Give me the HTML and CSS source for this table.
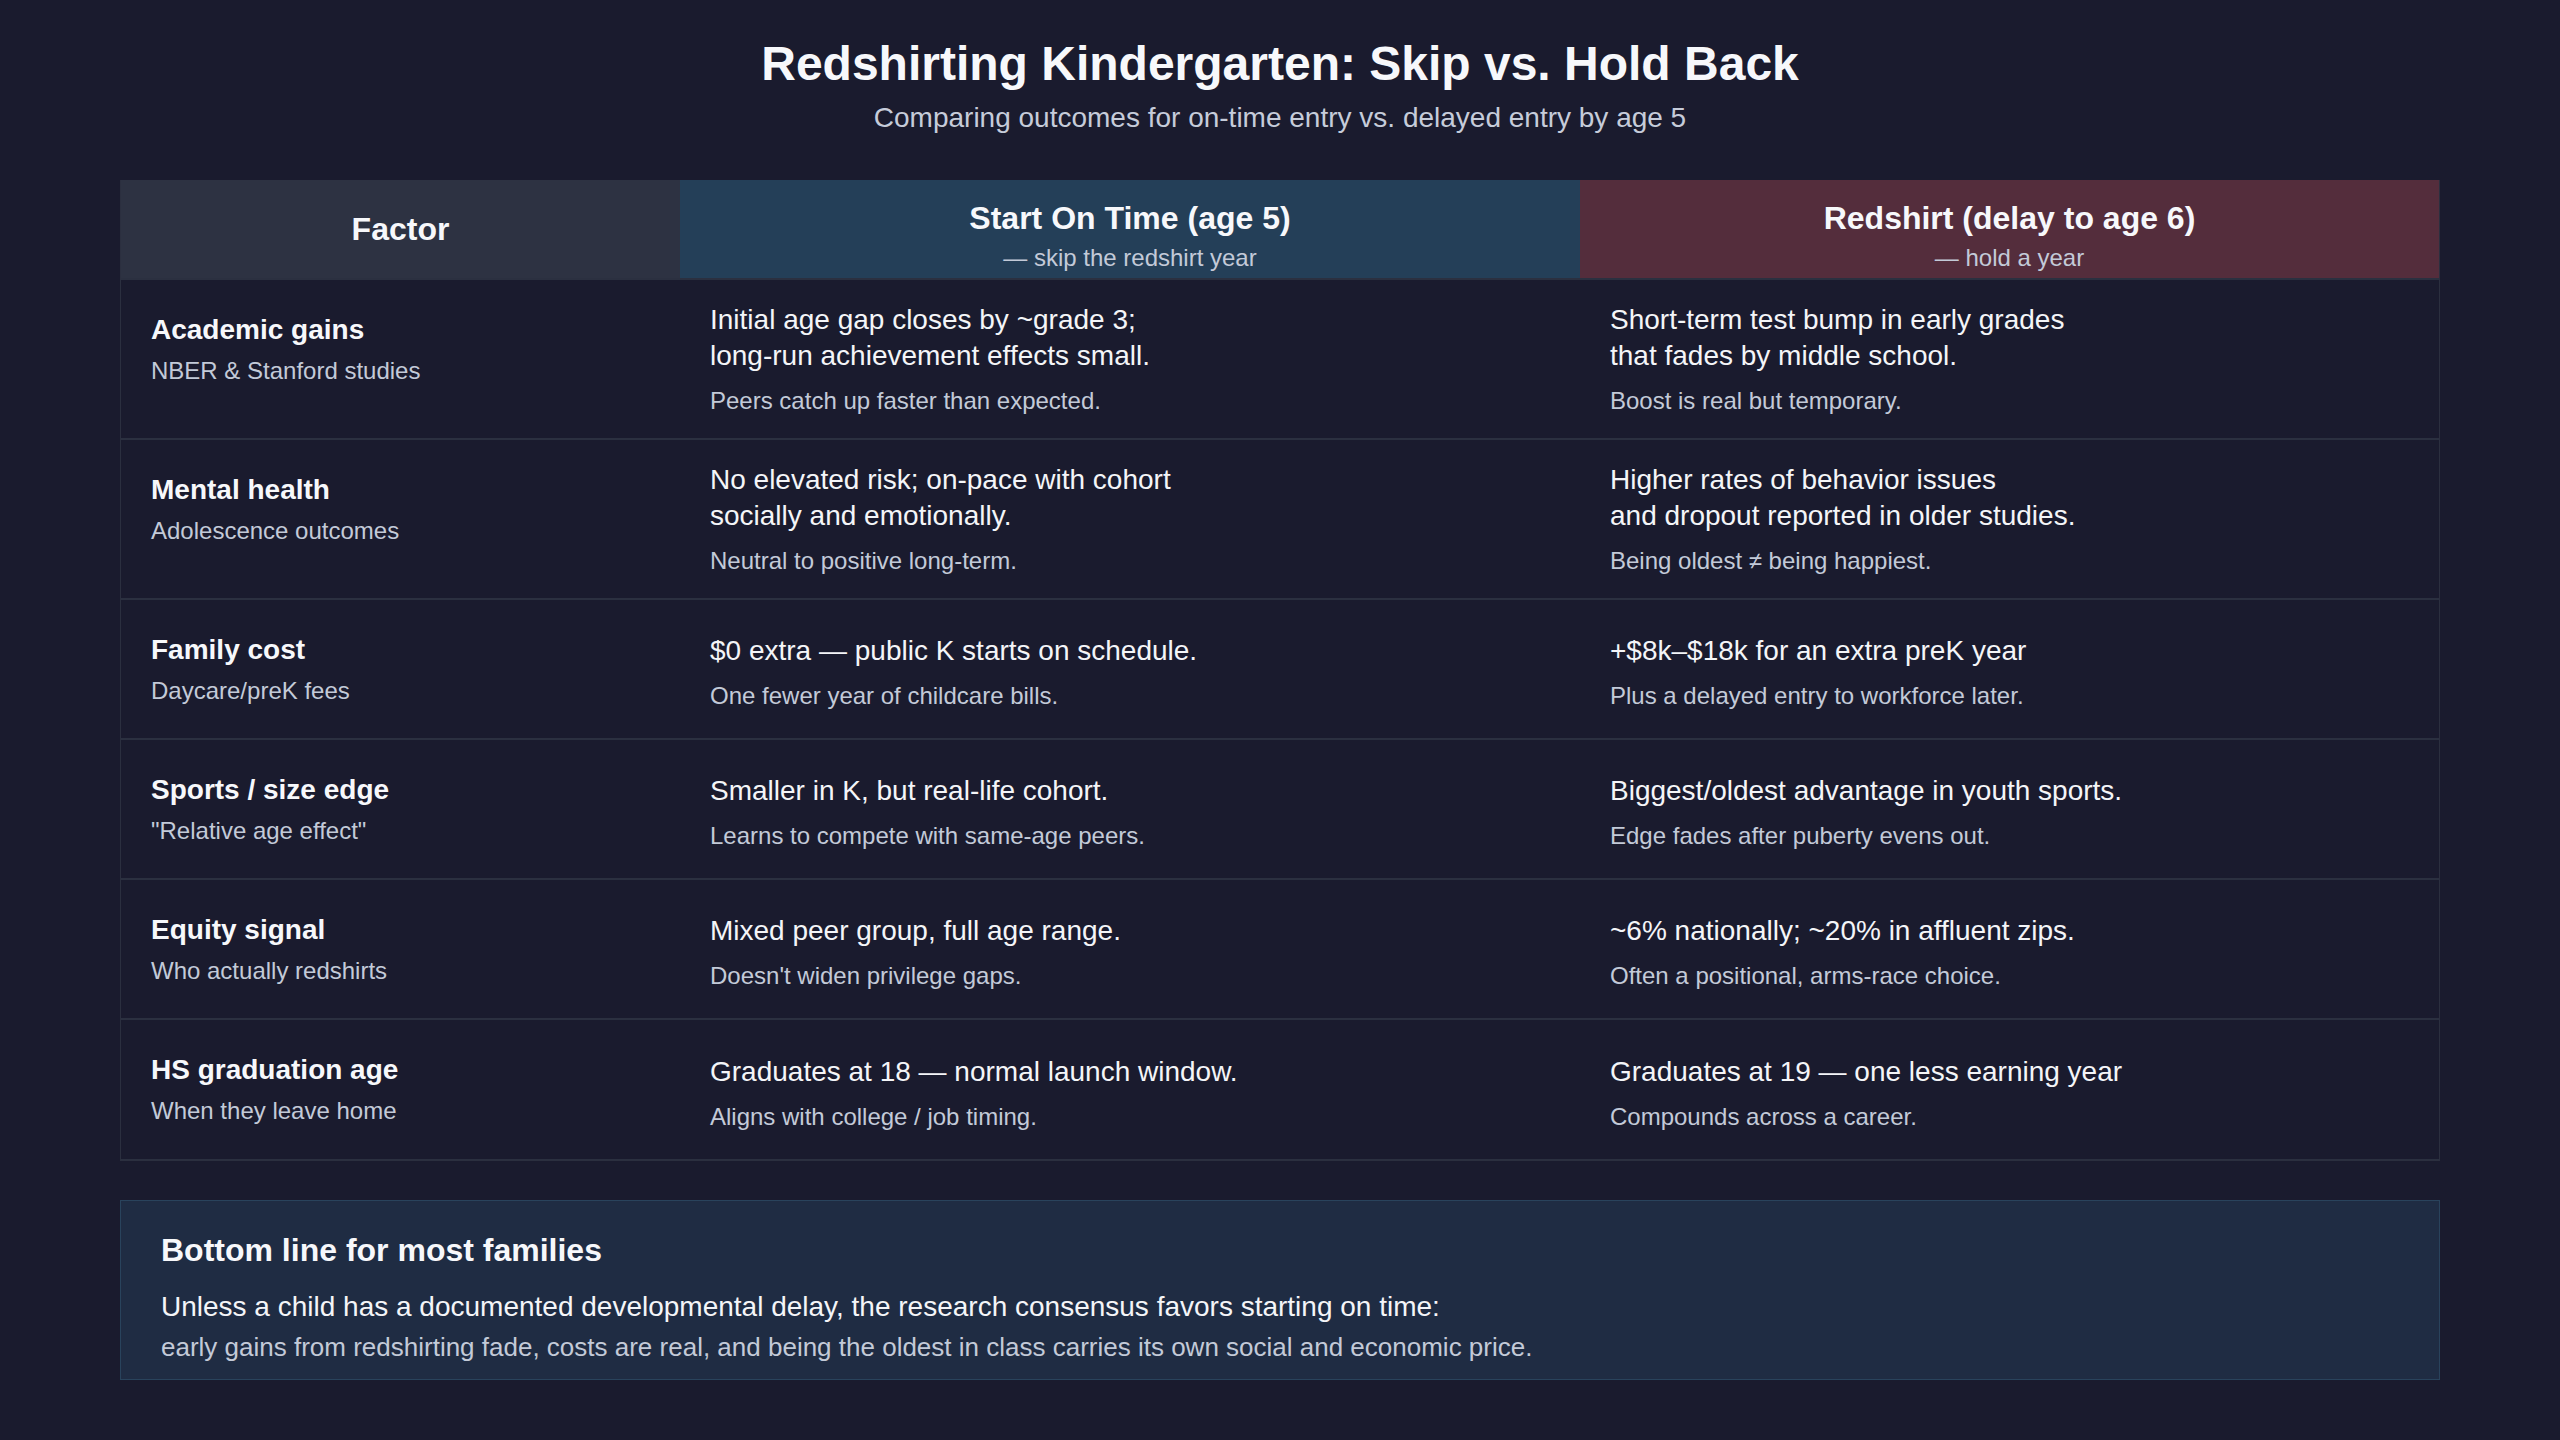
FILE: index.html
```html
<!DOCTYPE html>
<html lang="en">
<head>
<meta charset="utf-8">
<title>Redshirting Kindergarten: Skip vs. Hold Back</title>
<link rel="stylesheet" href="styles.css">
</head>
<body>
<main class="page">
  <header class="page-head">
    <h1 class="title">Redshirting Kindergarten: Skip vs. Hold Back</h1>
    <p class="subtitle">Comparing outcomes for on-time entry vs. delayed entry by age 5</p>
  </header>

  <section class="table">
    <div class="row head-row">
      <div class="hcell h-factor"><span class="h-title">Factor</span></div>
      <div class="hcell h-ontime"><span class="h-title">Start On Time (age 5)</span><span class="h-sub">— skip the redshirt year</span></div>
      <div class="hcell h-redshirt"><span class="h-title">Redshirt (delay to age 6)</span><span class="h-sub">— hold a year</span></div>
    </div>

    <div class="row body-row tall">
      <div class="factor"><div class="f-title">Academic gains</div><div class="f-sub">NBER &amp; Stanford studies</div></div>
      <div class="cell"><div class="main">Initial age gap closes by ~grade 3;<br>long-run achievement effects small.</div><div class="note">Peers catch up faster than expected.</div></div>
      <div class="cell"><div class="main">Short-term test bump in early grades<br>that fades by middle school.</div><div class="note">Boost is real but temporary.</div></div>
    </div>

    <div class="row body-row tall">
      <div class="factor"><div class="f-title">Mental health</div><div class="f-sub">Adolescence outcomes</div></div>
      <div class="cell"><div class="main">No elevated risk; on-pace with cohort<br>socially and emotionally.</div><div class="note">Neutral to positive long-term.</div></div>
      <div class="cell"><div class="main">Higher rates of behavior issues<br>and dropout reported in older studies.</div><div class="note">Being oldest ≠ being happiest.</div></div>
    </div>

    <div class="row body-row">
      <div class="factor"><div class="f-title">Family cost</div><div class="f-sub">Daycare/preK fees</div></div>
      <div class="cell"><div class="main">$0 extra — public K starts on schedule.</div><div class="note">One fewer year of childcare bills.</div></div>
      <div class="cell"><div class="main">+$8k–$18k for an extra preK year</div><div class="note">Plus a delayed entry to workforce later.</div></div>
    </div>

    <div class="row body-row">
      <div class="factor"><div class="f-title">Sports / size edge</div><div class="f-sub">"Relative age effect"</div></div>
      <div class="cell"><div class="main">Smaller in K, but real-life cohort.</div><div class="note">Learns to compete with same-age peers.</div></div>
      <div class="cell"><div class="main">Biggest/oldest advantage in youth sports.</div><div class="note">Edge fades after puberty evens out.</div></div>
    </div>

    <div class="row body-row">
      <div class="factor"><div class="f-title">Equity signal</div><div class="f-sub">Who actually redshirts</div></div>
      <div class="cell"><div class="main">Mixed peer group, full age range.</div><div class="note">Doesn't widen privilege gaps.</div></div>
      <div class="cell"><div class="main">~6% nationally; ~20% in affluent zips.</div><div class="note">Often a positional, arms-race choice.</div></div>
    </div>

    <div class="row body-row last">
      <div class="factor"><div class="f-title">HS graduation age</div><div class="f-sub">When they leave home</div></div>
      <div class="cell"><div class="main">Graduates at 18 — normal launch window.</div><div class="note">Aligns with college / job timing.</div></div>
      <div class="cell"><div class="main">Graduates at 19 — one less earning year</div><div class="note">Compounds across a career.</div></div>
    </div>
  </section>

  <section class="summary">
    <h2 class="sum-title">Bottom line for most families</h2>
    <p class="sum-main">Unless a child has a documented developmental delay, the research consensus favors starting on time:</p>
    <p class="sum-sub">early gains from redshirting fade, costs are real, and being the oldest in class carries its own social and economic price.</p>
  </section>
</main>
</body>
</html>
```

FILE: styles.css
```css
* { box-sizing: border-box; }

html, body {
  margin: 0;
  padding: 0;
  background: #1a1b2e;
}

body {
  font-family: "Liberation Sans", Arial, Helvetica, sans-serif;
  color: #f4f5f8;
}

.page {
  width: 2560px;
  min-height: 1440px;
  padding: 36px 120px 0;
}

.page-head {
  text-align: center;
}

.title {
  margin: 0;
  font-size: 48px;
  line-height: 56px;
  font-weight: 700;
  color: #f7f8fb;
}

.subtitle {
  margin: 8px 0 0;
  font-size: 28px;
  line-height: 36px;
  color: #c6ccda;
}

.table {
  margin-top: 44px;
  border: 1px solid #2b2f3f;
  border-top: none;
}

.row {
  display: grid;
  grid-template-columns: 559px 900px 1fr;
}

.head-row {
  height: 100px;
  border-bottom: 2px solid #2b3040;
}

.hcell {
  display: flex;
  flex-direction: column;
  align-items: center;
  text-align: center;
}

.h-factor {
  background: #2d3242;
  justify-content: center;
}

.h-ontime {
  background: #243f58;
  padding-top: 20px;
}

.h-redshirt {
  background: #542d3c;
  padding-top: 20px;
}

.h-title {
  font-size: 32px;
  line-height: 36px;
  font-weight: 700;
  color: #f7f8fb;
}

.h-sub {
  margin-top: 7px;
  font-size: 24px;
  line-height: 30px;
  color: #c3cad8;
}

.body-row {
  height: 140px;
  border-bottom: 2px solid #2b3040;
}

.body-row.tall {
  height: 160px;
}

.body-row.last {
  border-bottom: 1px solid #2b3040;
}

.factor {
  padding: 32px 30px 0 30px;
}

.f-title {
  font-size: 28px;
  line-height: 36px;
  font-weight: 700;
  color: #f7f8fb;
}

.f-sub {
  margin-top: 8px;
  font-size: 24px;
  line-height: 30px;
  color: #c3cad8;
}

.cell {
  display: flex;
  flex-direction: column;
  justify-content: center;
  padding: 6px 30px 0;
}

.tall .cell {
  padding-top: 0;
}

.main {
  font-size: 28px;
  line-height: 36px;
  color: #f4f5f8;
}

.note {
  margin-top: 12px;
  font-size: 24px;
  line-height: 30px;
  color: #c3cad8;
}

.summary {
  margin-top: 39px;
  background: #1f2c43;
  border: 1px solid #29435c;
  padding: 29px 40px 17px;
}

.sum-title {
  margin: 0;
  font-size: 32px;
  line-height: 40px;
  font-weight: 700;
  color: #f7f8fb;
}

.sum-main {
  margin: 20px 0 0;
  font-size: 28px;
  line-height: 34px;
  color: #f4f5f8;
}

.sum-sub {
  margin: 8px 0 0;
  font-size: 26px;
  line-height: 30px;
  color: #c3cad8;
}
```
